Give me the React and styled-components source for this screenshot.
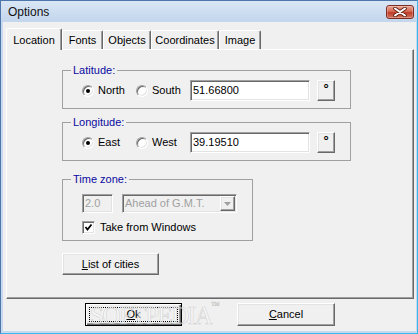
import React from 'react'
import styled, { createGlobalStyle, css } from 'styled-components'

const GlobalStyle = createGlobalStyle`
  html, body { margin:0; padding:0; background:#fff; }
  body {
    font-family:"Liberation Sans", Arial, sans-serif;
    font-size:11px;
    color:#000;
  }
`

const sunken = css`
  border:1px solid;
  border-color:#a0a0a0 #fff #fff #a0a0a0;
  box-shadow:inset 1px 1px 0 #696969, inset -1px -1px 0 #e3e3e3;
`

const raised = css`
  border:1px solid;
  border-color:#fff #696969 #696969 #fff;
  box-shadow:inset -1px -1px 0 #a0a0a0, inset 1px 1px 0 #e3e3e3;
`

const Window = styled.div`
  width:418px;
  height:334px;
  box-sizing:border-box;
  display:flex;
  flex-direction:column;
  background:#c6d9ef;
  border:1px solid #4d77aa;
  border-right-color:#38b8ea;
  border-bottom-color:#38b8ea;
`

const TitleBar = styled.div`
  height:21px;
  flex:none;
  display:flex;
  align-items:center;
  justify-content:space-between;
  padding:0 3px 0 7px;
  background:linear-gradient(#d9e6f5, #c3d6ed);
  font-size:12px;
  color:#111;
`

const CloseButton = styled.div`
  width:28px;
  height:14px;
  box-sizing:border-box;
  border:1px solid #7c2d22;
  border-radius:3px;
  background:linear-gradient(#eaa593, #d66a55 45%, #c03c28 55%, #d37560);
  box-shadow:inset 0 0 0 1px rgba(255,255,255,0.25);
  display:flex;
  align-items:center;
  justify-content:center;
`

const Client = styled.div`
  flex:1;
  display:flex;
  flex-direction:column;
  margin:0 1px 2px 2px;
  padding:6px 2px 5px 3px;
  background:#f0f0f0;
`

const TabRow = styled.div`
  display:flex;
  align-items:flex-end;
  height:21px;
  flex:none;
`

const Tab = styled.div`
  box-sizing:border-box;
  width:${p => p.$w}px;
  height:${p => (p.$active ? 22 : 19)}px;
  margin-bottom:${p => (p.$active ? -1 : 0)}px;
  position:relative;
  z-index:${p => (p.$active ? 1 : 0)};
  display:flex;
  align-items:center;
  justify-content:center;
  background:#f0f0f0;
  border:1px solid;
  border-bottom:none;
  border-color:#fff #696969 transparent #fff;
  border-radius:2px 2px 0 0;
  box-shadow:inset -1px 0 0 #a0a0a0;
`

const Panel = styled.div`
  flex:1;
  box-sizing:border-box;
  border:1px solid;
  border-color:#fff #696969 #696969 #fff;
  box-shadow:inset -1px -1px 0 #a0a0a0;
  padding:13px 0 0 55px;
  display:flex;
  flex-direction:column;
  align-items:flex-start;
`

const Group = styled.fieldset`
  box-sizing:border-box;
  width:${p => p.$w}px;
  min-width:0;
  margin:${p => p.$mt || 0}px 0 0;
  padding:0 0 ${p => p.$pb}px 8px;
  border:1px solid #a0a0a0;
`

const Legend = styled.legend`
  padding:0 2px;
  font-size:11px;
  line-height:14px;
  color:#0a0aa0;
`

const Row = styled.div`
  display:flex;
  align-items:center;
  padding-left:11px;
  margin-top:${p => p.$mt || 0}px;
`

const Option = styled.label`
  display:flex;
  align-items:center;
  gap:4px;
  width:${p => p.$w}px;
  flex:none;
  line-height:13px;
`

const Radio = styled.span`
  width:12px;
  height:12px;
  box-sizing:border-box;
  border-radius:50%;
  border:1px solid;
  border-color:#a0a0a0 #fff #fff #a0a0a0;
  box-shadow:inset 1px 1px 0 #696969, inset -1px -1px 0 #e3e3e3;
  background:#fff;
  display:flex;
  align-items:center;
  justify-content:center;
  &::after {
    content:'';
    width:4px;
    height:4px;
    border-radius:50%;
    background:${p => (p.$on ? '#000' : 'transparent')};
  }
`

const Check = styled.span`
  width:13px;
  height:13px;
  box-sizing:border-box;
  ${sunken}
  background:#fff;
  display:flex;
  align-items:center;
  justify-content:center;
`

const Field = styled.div`
  box-sizing:border-box;
  width:${p => p.$w}px;
  height:${p => p.$h}px;
  margin-left:${p => p.$ml || 0}px;
  ${sunken}
  background:${p => (p.$disabled ? '#f0f0f0' : '#fff')};
  color:${p => (p.$disabled ? '#a0a0a0' : '#000')};
  display:flex;
  align-items:center;
  padding-left:2px;
  line-height:13px;
`

const FieldText = styled.span`
  flex:1;
  white-space:nowrap;
`

const ComboArrow = styled.span`
  box-sizing:border-box;
  width:15px;
  height:15px;
  margin-right:1px;
  ${raised}
  background:#f0f0f0;
  display:flex;
  align-items:center;
  justify-content:center;
`

const DegreeButton = styled.div`
  box-sizing:border-box;
  width:18px;
  height:21px;
  margin-left:7px;
  ${raised}
  background:#f0f0f0;
  display:flex;
  justify-content:center;
  align-items:flex-start;
  font-size:13px;
  font-weight:bold;
  line-height:13px;
  padding-top:1px;
`

const Button = styled.div`
  box-sizing:border-box;
  width:${p => p.$w}px;
  height:${p => p.$h}px;
  margin-top:${p => p.$mt || 0}px;
  position:relative;
  ${raised}
  background:#f0f0f0;
  display:flex;
  align-items:center;
  justify-content:center;
  line-height:13px;
  ${p => p.$default && css`
    border:1px solid #000;
    box-shadow:inset 1px 1px 0 #fff, inset -1px -1px 0 #696969, inset -2px -2px 0 #a0a0a0;
    &::after {
      content:'';
      position:absolute;
      inset:3px;
      border:1px dotted #000;
    }
  `}
`

const Footer = styled.div`
  flex:none;
  position:relative;
  display:flex;
  justify-content:center;
  gap:55px;
  margin-top:4px;
`

const Watermark = styled.div`
  position:absolute;
  left:84px;
  top:-3px;
  z-index:2;
  pointer-events:none;
  font-family:"Liberation Serif", "Times New Roman", serif;
  font-size:25px;
  letter-spacing:-1.5px;
  color:rgba(255,255,255,0.55);
  -webkit-text-stroke:0.6px rgba(150,150,150,0.4);
  sup { font-size:9px; letter-spacing:0; vertical-align:16px; }
`

function CoordGroup({ title, first, second, value, mt }) {
  return (
    <Group $w={289} $pb={7} $mt={mt}>
      <Legend>{title}</Legend>
      <Row $mt={3}>
        <Option $w={54}><Radio $on />{first}</Option>
        <Option $w={54}><Radio />{second}</Option>
        <Field $w={120} $h={21}><FieldText>{value}</FieldText></Field>
        <DegreeButton>°</DegreeButton>
      </Row>
    </Group>
  )
}

const tabs = [
  { name: 'Location', w: 56, active: true },
  { name: 'Fonts', w: 41 },
  { name: 'Objects', w: 48 },
  { name: 'Coordinates', w: 68 },
  { name: 'Image', w: 42 },
]

export default function App() {
  return (
    <>
      <GlobalStyle />
      <Window>
        <TitleBar>
          <span>Options</span>
          <CloseButton>
            <svg width="14" height="10" viewBox="0 0 14 10">
              <path d="M2 1.5 L12 8.5 M12 1.5 L2 8.5" stroke="#5a1c12" strokeWidth="3.6" strokeLinecap="round" />
              <path d="M2 1.5 L12 8.5 M12 1.5 L2 8.5" stroke="#fff" strokeWidth="2" strokeLinecap="round" />
            </svg>
          </CloseButton>
        </TitleBar>
        <Client>
          <TabRow>
            {tabs.map(t => (
              <Tab key={t.name} $w={t.w} $active={t.active}>{t.name}</Tab>
            ))}
          </TabRow>
          <Panel>
            <CoordGroup title="Latitude:" first="North" second="South" value="51.66800" />
            <CoordGroup title="Longitude:" first="East" second="West" value="39.19510" mt={6} />
            <Group $w={191} $pb={6} $mt={11}>
              <Legend>Time zone:</Legend>
              <Row $mt={8}>
                <Field $w={31} $h={19} $disabled><FieldText>2.0</FieldText></Field>
                <Field $w={115} $h={19} $ml={9} $disabled>
                  <FieldText>Ahead of G.M.T.</FieldText>
                  <ComboArrow>
                    <svg width="7" height="4" viewBox="0 0 7 4">
                      <polygon points="0,0 7,0 3.5,4" fill="#a0a0a0" />
                    </svg>
                  </ComboArrow>
                </Field>
              </Row>
              <Row $mt={8}>
                <Option>
                  <Check>
                    <svg width="9" height="9" viewBox="0 0 9 9">
                      <polyline points="1.5,4 3.5,6.5 7.5,1.5" fill="none" stroke="#000" strokeWidth="1.8" />
                    </svg>
                  </Check>
                  <span style={{ marginLeft: 1 }}>Take from Windows</span>
                </Option>
              </Row>
            </Group>
            <Button $w={97} $h={22} $mt={12}><span><u>L</u>ist of cities</span></Button>
          </Panel>
          <Footer>
            <Button $w={97} $h={23} $default><span><u>O</u>k</span></Button>
            <Button $w={98} $h={23}><span><u>C</u>ancel</span></Button>
            <Watermark>SOFTPEDIA<sup>™</sup></Watermark>
          </Footer>
        </Client>
      </Window>
    </>
  )
}
